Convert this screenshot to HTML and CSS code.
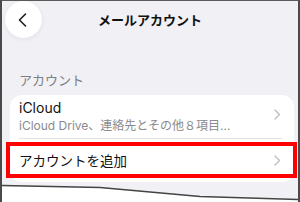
FILE: index.html
```html
<!DOCTYPE html>
<html lang="ja">
<head>
<meta charset="utf-8">
<link rel="stylesheet" href="styles.css">
</head>
<body>
<div class="shot">
  <div class="nav">
    <div class="back">
      <svg width="12" height="14" viewBox="0 0 12 14"><polyline points="8.5,1 2.5,7 8.5,13" fill="none" stroke="#1c1c1e" stroke-width="1.6" stroke-linecap="round" stroke-linejoin="round"/></svg>
    </div>
    <div class="title">メールアカウント</div>
    <div></div>
  </div>
  <div class="section-label">アカウント</div>
  <div class="card">
    <div class="row icloud">
      <div class="texts">
        <div class="row-title">iCloud</div>
        <div class="row-sub">iCloud Drive、連絡先とその他８項目...</div>
      </div>
      <svg class="chev" width="7" height="11" viewBox="0 0 7 11"><polyline points="1,1 5.5,5.5 1,10" fill="none" stroke="#c2c2c6" stroke-width="1.5" stroke-linecap="round" stroke-linejoin="round"/></svg>
    </div>
    <div class="row add">
      <div class="row-title add-title">アカウントを追加</div>
      <svg class="chev" width="7" height="11" viewBox="0 0 7 11"><polyline points="1,1 5.5,5.5 1,10" fill="none" stroke="#c2c2c6" stroke-width="1.5" stroke-linecap="round" stroke-linejoin="round"/></svg>
    </div>
  </div>
  <svg class="tear" width="300" height="30" viewBox="0 0 300 30">
    <polygon points="0,13.5 100,15.5 150,20 200,24.5 300,27.5 300,30 0,30" fill="#ffffff"/>
    <polyline points="0,13.5 100,15.5 150,20 200,24.5 300,27.5" fill="none" stroke="#444444" stroke-width="1.5"/>
  </svg>
</div>
</body>
</html>
```
FILE: styles.css
```css
html, body {
  margin: 0;
  padding: 0;
  background: #ffffff;
}
body {
  font-family: "Inter", "Noto Sans CJK JP", sans-serif;
  color: #111111;
}
.shot {
  position: relative;
  width: 300px;
  height: 202px;
  box-sizing: border-box;
  background: #f0f0f5;
  border-left: 2px solid #4a4a4a;
  border-right: 2px solid #4a4a4a;
  border-top: 1px solid #5a5a5a;
  overflow: hidden;
}
.nav {
  height: 37px;
  display: grid;
  grid-template-columns: 1fr auto 1fr;
  align-items: center;
}
.back {
  width: 37px;
  height: 37px;
  margin-left: 3px;
  border-radius: 50%;
  background: #ffffff;
  box-shadow: 0 1px 5px rgba(0, 0, 0, 0.07);
  display: flex;
  align-items: center;
  justify-content: center;
}
.back svg {
  margin-left: -2px;
}
.title {
  font-family: "Noto Sans CJK JP", sans-serif;
  font-weight: 700;
  font-size: 13px;
  line-height: 16px;
  color: #111111;
}
.section-label {
  font-family: "Noto Sans CJK JP", sans-serif;
  font-size: 13px;
  line-height: 16px;
  color: #7e7e83;
  margin-top: 34px;
  padding-left: 17px;
}
.card {
  margin: 7px 4px 0 8px;
  background: #ffffff;
  border-radius: 12px;
}
.row {
  display: flex;
  align-items: center;
  justify-content: space-between;
  margin: 0 12px 0 9px;
}
.icloud {
  padding: 4px 0 5px;
  border-bottom: 1px solid #e3e3e7;
}
.row-title {
  font-size: 14px;
  line-height: 17px;
  color: #111111;
}
.row-sub {
  font-size: 12px;
  line-height: 15px;
  margin-top: 2px;
  color: #8a8a8e;
}
.chev {
  margin-right: 1px;
  flex: none;
}
.icloud .chev {
  margin-top: -3px;
}
.add {
  position: relative;
  height: 43px;
}
.add-title {
  font-family: "Noto Sans CJK JP", sans-serif;
  font-size: 13.5px;
}
.add::after {
  content: "";
  position: absolute;
  top: 3px;
  bottom: 4px;
  left: -13px;
  right: -15px;
  border: 4px solid #ff0000;
}
.tear {
  position: absolute;
  left: -2px;
  bottom: 0;
  display: block;
}
```
